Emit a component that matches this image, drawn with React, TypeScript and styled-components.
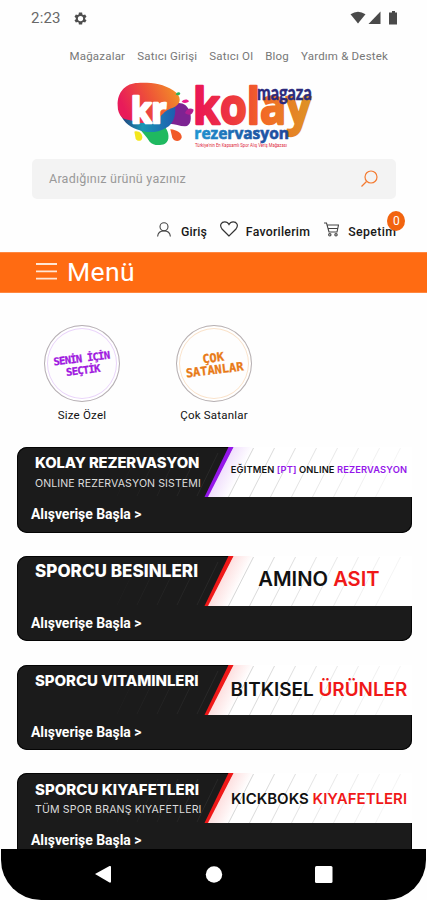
import React from 'react';
import styled, { createGlobalStyle } from 'styled-components';

const GlobalStyle = createGlobalStyle`
  * { box-sizing: border-box; }
  html, body { margin: 0; padding: 0; background: #fff; }
  body { font-family: Roboto, "Liberation Sans", sans-serif; overflow: hidden; }
`;

const Screen = styled.div`
  width: 427px;
  height: 900px;
  display: flex;
  flex-direction: column;
  overflow: hidden;
  background: #fefefe;
`;

const StatusBar = styled.div`
  height: 36px;
  flex: none;
  display: flex;
  align-items: center;
  padding: 0 29px 0 31px;
  color: #686868;
`;

const Clock = styled.span`
  font-size: 15px;
  letter-spacing: 0.2px;
  width: 42px;
`;

const StatusIcons = styled.div`
  margin-left: auto;
  display: flex;
  align-items: center;
`;

const TopLinks = styled.nav`
  height: 40px;
  flex: none;
  display: flex;
  align-items: center;
  gap: 12px;
  padding-left: 69.5px;
`;

const TopLink = styled.a`
  font-size: 11.5px;
  color: #777;
  white-space: nowrap;
  letter-spacing: 0.2px;
`;

const LogoRow = styled.div`
  height: 83px;
  flex: none;
  padding-left: 105px;
  svg { display: block; overflow: visible; }
`;

const SearchBox = styled.div`
  height: 40px;
  flex: none;
  margin: 0 31px 0 32px;
  padding: 0 18px 0 17px;
  border-radius: 5px;
  background: #f3f3f3;
  display: flex;
  align-items: center;
  justify-content: space-between;
`;

const Placeholder = styled.span`
  font-size: 12.5px;
  color: #999;
  letter-spacing: 0.23px;
  padding-bottom: 2px;
`;

const AccountRow = styled.div`
  height: 53px;
  flex: none;
  display: flex;
  align-items: center;
  padding: 12px 0 0 157px;
`;

const AccountItem = styled.div<{ $gap: number; $after: number; $spacing: number }>`
  position: relative;
  display: flex;
  align-items: center;
  gap: ${(p) => p.$gap}px;
  margin-right: ${(p) => p.$after}px;
  font-size: 12.3px;
  font-weight: 500;
  letter-spacing: ${(p) => p.$spacing}px;
  color: #181818;
  svg { margin-top: -5px; }
`;

const CartBadge = styled.span`
  position: absolute;
  right: -9px;
  top: -14px;
  width: 18px;
  height: 20px;
  border-radius: 50%;
  background: #f2640f;
  color: #fff;
  font-size: 12px;
  font-weight: 400;
  letter-spacing: 0;
  display: flex;
  align-items: center;
  justify-content: center;
`;

const MenuBar = styled.div`
  height: 41px;
  flex: none;
  background: #ff6b12;
  border-top: 1px solid #ff8740;
  border-bottom: 1px solid #ff8740;
  display: flex;
  align-items: center;
  gap: 10px;
  padding: 0 0 2px 36px;
  color: #fff;
  font-size: 26.5px;
  letter-spacing: 0.4px;
`;

const Stories = styled.div`
  height: 154px;
  flex: none;
  display: flex;
  gap: 54px;
  padding: 32px 0 0 43px;
`;

const Story = styled.div`
  width: 78px;
  display: flex;
  flex-direction: column;
  align-items: center;
`;

const StoryRing = styled.div<{ $tint: string; $ink: string }>`
  width: 76px;
  height: 77px;
  border-radius: 50%;
  border: 1.5px solid #b5afb2;
  box-shadow: inset 0 0 0 2px #fff, inset 0 0 0 3px ${(p) => p.$tint};
  color: ${(p) => p.$ink};
  display: flex;
  align-items: center;
  justify-content: center;
`;

const StoryArt = styled.div<{ $size: number; $spacing: number }>`
  font-family: "DejaVu Sans Mono", monospace;
  font-size: ${(p) => p.$size}px;
  font-weight: 700;
  line-height: 12px;
  letter-spacing: ${(p) => p.$spacing}px;
  -webkit-text-stroke: 0.3px currentColor;
  text-align: center;
  white-space: nowrap;
  transform: rotate(-7deg);
`;

const StoryLabel = styled.span`
  font-size: 11.5px;
  color: #111;
  margin-top: 6px;
  line-height: 14px;
  white-space: nowrap;
  letter-spacing: 0.2px;
`;

const Banners = styled.div`
  flex: 1;
  min-height: 0;
  overflow: hidden;
  display: flex;
  flex-direction: column;
  gap: 23.3px;
  padding: 0 15px 0 17px;
`;

const BannerCard = styled.div`
  height: 85.5px;
  flex: none;
  border-radius: 10px 0 10px 10px;
  overflow: hidden;
  background: #1b1b1b;
  box-shadow: inset 0 0 0 1px #050505;
`;

const BannerArt = styled.div`
  height: 51px;
  display: grid;
  grid-template-columns: 209px 186px;
  svg { grid-area: 1 / 1 / 2 / 3; display: block; }
`;

const BannerLeft = styled.div`
  grid-area: 1 / 1;
  z-index: 1;
  padding: 6.5px 0 0 18px;
  color: #fff;
  font-family: Inter, sans-serif;
  white-space: nowrap;
`;

const BannerTitle = styled.div<{ $size: number; $spacing: number }>`
  font-size: ${(p) => p.$size}px;
  letter-spacing: ${(p) => p.$spacing}px;
  font-weight: 800;
  line-height: 19px;
`;

const BannerSub = styled.div<{ $spacing: number }>`
  font-size: 10.6px;
  line-height: 21px;
  color: #ddd;
  letter-spacing: ${(p) => p.$spacing}px;
`;

const BannerRight = styled.div<{ $size: number; $spacing: number; $bottom: number }>`
  grid-area: 1 / 2;
  z-index: 1;
  display: flex;
  align-items: center;
  justify-content: center;
  font-family: Inter, sans-serif;
  font-weight: 600;
  font-size: ${(p) => p.$size}px;
  letter-spacing: ${(p) => p.$spacing}px;
  padding-bottom: ${(p) => p.$bottom}px;
  color: #111;
  white-space: pre;
`;

const Accent = styled.span<{ $color: string }>`
  color: ${(p) => p.$color};
`;

const BannerAction = styled.div`
  padding: 6px 0 0 14px;
  font-size: 14px;
  font-weight: 700;
  line-height: 20px;
  color: #fff;
  letter-spacing: -0.05px;
`;

const NavBar = styled.div`
  height: 51px;
  flex: none;
  background: #000;
  border-radius: 0 0 40px 40px;
  margin: 0 1px;
  svg { display: block; }
`;

const Logo = () => (
  <svg width="220" height="80" viewBox="0 3 660 240">
    <defs>
      <linearGradient id="blob" x1="0" y1="0.3" x2="1" y2="0">
        <stop offset="0" stopColor="#e81b5a" />
        <stop offset="0.45" stopColor="#ee5238" />
        <stop offset="1" stopColor="#f39a25" />
      </linearGradient>
      <linearGradient id="word" gradientUnits="userSpaceOnUse" x1="270" y1="0" x2="618" y2="0">
        <stop offset="0" stopColor="#ea1556" />
        <stop offset="0.35" stopColor="#ee3b3c" />
        <stop offset="0.6" stopColor="#f26a25" />
        <stop offset="1" stopColor="#dd9426" />
      </linearGradient>
      <linearGradient id="sea" x1="0" y1="0" x2="1" y2="0">
        <stop offset="0" stopColor="#233b78" />
        <stop offset="0.4" stopColor="#1997b5" />
        <stop offset="1" stopColor="#1e5cb0" />
      </linearGradient>
      <linearGradient id="sub" x1="0" y1="0" x2="1" y2="0">
        <stop offset="0" stopColor="#1f95d2" />
        <stop offset="0.5" stopColor="#1c62ad" />
        <stop offset="1" stopColor="#1f479c" />
      </linearGradient>
    </defs>
    <path d="M196 92C222 76 244 84 254 108C261 128 258 154 240 154C220 154 204 142 180 148Z" fill="#7d2392" />
    <path d="M100 160C122 150 160 146 180 156C192 170 196 198 180 206C164 213 144 212 134 200C124 186 114 172 100 160Z" fill="#1fb960" />
    <path d="M46 118L120 90L208 80C216 112 208 146 184 158C158 174 124 174 104 166C78 158 58 146 46 118Z" fill="url(#sea)" />
    <path d="M38 92C36 50 64 24 98 24C134 22 174 26 204 46C232 64 230 88 204 98C184 104 178 112 168 122C146 144 116 148 92 140C74 134 60 134 52 128C42 118 38 106 38 92Z" fill="url(#blob)" />
    <path d="M88 170C102 166 112 176 112 188C110 200 98 200 92 192Z" fill="#f3e61d" />
    <path d="M196 163C216 164 232 176 230 188C224 202 208 200 202 188Z" fill="#f15a29" />
    <path d="M230 80C236 72 248 72 252 79C246 84 238 86 230 80Z" fill="#ec1b8c" />
    <path d="M212 58C216 50 224 50 226 56C222 62 216 62 212 58Z" fill="#27b45c" />
    <path d="M240 114C246 98 258 98 266 104C264 118 252 124 240 114Z" fill="#b01f90" />
    <text x="78" y="144" textLength="106" lengthAdjust="spacingAndGlyphs" fontFamily="Open Sans, sans-serif" fontWeight="700" fontSize="106" fill="#fff" stroke="#fff" strokeWidth="8" strokeLinejoin="round">kr</text>
    <text x="264" y="148" textLength="354" lengthAdjust="spacingAndGlyphs" fontFamily="Open Sans, sans-serif" fontWeight="700" fontSize="148" fill="url(#word)" stroke="url(#word)" strokeWidth="7" strokeLinejoin="round">kolay</text>
    <text x="456" y="75" textLength="164" lengthAdjust="spacingAndGlyphs" fontFamily="Lato, sans-serif" fontWeight="700" fontSize="60" fill="#2b2a7c" stroke="#2b2a7c" strokeWidth="1.5">magaza</text>
    <text x="268" y="193" textLength="284" lengthAdjust="spacingAndGlyphs" fontFamily="Open Sans, sans-serif" fontWeight="700" fontSize="50" fill="url(#sub)" stroke="url(#sub)" strokeWidth="2">rezervasyon</text>
    <text x="270" y="215" textLength="276" lengthAdjust="spacingAndGlyphs" fontFamily="Roboto, sans-serif" fontSize="18" fill="#e0283c">Türkiye'nin En Kapsamlı Spor Alış Veriş Mağazası</text>
  </svg>
);

type Banner = {
  title: string; size: number; spacing: number;
  sub?: string; subSpacing?: number;
  dark: string; accent: string; tail?: string; accent2?: string;
  rSize: number; rSpacing: number; rBottom: number; color: string;
};

const banners: Banner[] = [
  { title: 'KOLAY REZERVASYON', size: 14.8, spacing: -0.12, sub: 'ONLINE REZERVASYON SISTEMI', subSpacing: 0.08, dark: 'EĞITMEN ', accent: '[PT]', tail: ' ONLINE ', accent2: 'REZERVASYON', rSize: 9.3, rSpacing: 0.14, rBottom: 6, color: '#9416ea' },
  { title: 'SPORCU BESINLERI', size: 17, spacing: 0.05, dark: 'AMINO ', accent: 'ASIT', rSize: 20.2, rSpacing: 0, rBottom: 6, color: '#f01818' },
  { title: 'SPORCU VITAMINLERI', size: 15, spacing: -0.05, dark: 'BITKISEL ', accent: 'ÜRÜNLER', rSize: 18.9, rSpacing: 0, rBottom: 1, color: '#f01818' },
  { title: 'SPORCU KIYAFETLERI', size: 15, spacing: 0.03, sub: 'TÜM SPOR BRANŞ KIYAFETLERI', subSpacing: 0.15, dark: 'KICKBOKS ', accent: 'KIYAFETLERI', rSize: 15, rSpacing: 0, rBottom: 0, color: '#f01818' },
];

const ArtBackdrop = ({ color, id }: { color: string; id: string }) => (
  <svg width="395" height="51" viewBox="0 0 395 51">
    <defs>
      <linearGradient id={id} gradientUnits="userSpaceOnUse" x1="203" x2="220" y1="25" y2="33.5">
        <stop offset="0" stopColor={color} stopOpacity="0.14" />
        <stop offset="1" stopColor={color} stopOpacity="0" />
      </linearGradient>
    </defs>
    <path d="M216 0H395V50H190Z" fill="#fff" />
    <path d="M216 0H242L216 50H190Z" fill={`url(#${id})`} />
    {[0, 1, 2, 3, 4, 5, 6, 7].map((i) => (
      <path key={i} d={`M${236.5 + i * 21} 1L${211.5 + i * 21} 50`} stroke="#555" strokeWidth="0.9" strokeOpacity={0.27 - i * 0.028} />
    ))}
    {[0, 1, 2, 3, 4].map((i) => (
      <path key={i} d={`M${121 + i * 20} 6L${100 + i * 20} 49`} stroke="#fff" strokeOpacity={0.02 + i * 0.01} />
    ))}
    <path d="M211.500 0H216.500L191 50H187.500Z" fill={color} />
  </svg>
);

export default function App() {
  return (
    <>
      <GlobalStyle />
      <Screen>
        <StatusBar>
          <Clock>2:23</Clock>
          <svg width="15" height="15" viewBox="0 0 24 24" fill="#4e4e4e" fillRule="evenodd">
            <path d="M19.4 13a7.500 7.500 0 0 0 0-2l2.200-1.700-2.200-3.800-2.600 1a7.500 7.500 0 0 0-1.800-1L14.600 2.500H9.400L9 5.500a7.500 7.500 0 0 0-1.800 1l-2.600-1-2.200 3.800L4.600 11a7.500 7.500 0 0 0 0 2l-2.200 1.700 2.200 3.800 2.600-1a7.500 7.500 0 0 0 1.800 1l.4 3h5.200l.4-3a7.500 7.500 0 0 0 1.800-1l2.600 1 2.200-3.800ZM12 7.800a4.200 4.200 0 1 1 0 8.400 4.200 4.200 0 0 1 0-8.400Z" />
          </svg>
          <StatusIcons>
            <svg width="48" height="14" viewBox="0 0 48 14" fill="#4a4a4a">
              <path d="M0.500 3.200Q8 -1.800 15.500 3.200L8 12.500Z" />
              <path d="M30.500 0.500V13H18.500Z" />
              <path d="M41 1.500H42V0H45V1.500H47V13.500H39V1.500Z" />
            </svg>
          </StatusIcons>
        </StatusBar>
        <TopLinks>
          <TopLink>Mağazalar</TopLink>
          <TopLink>Satıcı Girişi</TopLink>
          <TopLink>Satıcı Ol</TopLink>
          <TopLink>Blog</TopLink>
          <TopLink>Yardım &amp; Destek</TopLink>
        </TopLinks>
        <LogoRow><Logo /></LogoRow>
        <SearchBox>
          <Placeholder>Aradığınız ürünü yazınız</Placeholder>
          <svg width="17" height="18" viewBox="0 0 17 18" fill="none" stroke="#f47a30" strokeWidth="1.200">
            <circle cx="10" cy="7" r="6" />
            <path d="M5.500 11.500L0.500 16.500" />
          </svg>
        </SearchBox>
        <AccountRow>
          <AccountItem $gap={10} $after={13} $spacing={0.1}>
            <svg width="14" height="15" viewBox="0 0 14 15" fill="none" stroke="#444" strokeWidth="1.100">
              <circle cx="7" cy="4.800" r="4" />
              <path d="M0.600 14.500C1 10.500 3.500 8.900 7 8.900S13 10.500 13.400 14.500" />
            </svg>
            Giriş
          </AccountItem>
          <AccountItem $gap={8} $after={14} $spacing={0.26}>
            <svg width="18" height="16" viewBox="0 0 18 16" fill="none" stroke="#333" strokeWidth="1.200">
              <path d="M9 15L2 8C-1 4 1.500 0.800 4.800 0.800C7 0.800 8.400 2.200 9 3.400C9.600 2.200 11 0.800 13.200 0.800C16.500 0.800 19 4 16 8Z" />
            </svg>
            Favorilerim
          </AccountItem>
          <AccountItem $gap={9} $after={0} $spacing={0.4}>
            <svg width="15" height="15" viewBox="0 0 15 15" fill="none" stroke="#444" strokeWidth="1.100">
              <path d="M0 1H2.500L5 10H13L14.500 3H3.200M4 6.500H13.500" />
              <circle cx="5.800" cy="12.800" r="1.200" />
              <circle cx="12" cy="12.800" r="1.200" />
            </svg>
            Sepetim
            <CartBadge>0</CartBadge>
          </AccountItem>
        </AccountRow>
        <MenuBar>
          <svg width="21" height="17" viewBox="0 0 21 17" stroke="#ffe6d6" strokeWidth="1.800">
            <path d="M0 1H21M0 8.300H21M0 15.600H21" />
          </svg>
          Menü
        </MenuBar>
        <Stories>
          <Story>
            <StoryRing $tint="#ead5fa" $ink="#a018e0"><StoryArt $size={10.5} $spacing={-0.7}>SENİN İÇİN<br />SEÇTİK</StoryArt></StoryRing>
            <StoryLabel>Size Özel</StoryLabel>
          </Story>
          <Story>
            <StoryRing $tint="#fae3cb" $ink="#e87a16"><StoryArt $size={12} $spacing={0}>ÇOK<br />SATANLAR</StoryArt></StoryRing>
            <StoryLabel>Çok Satanlar</StoryLabel>
          </Story>
        </Stories>
        <Banners>
          {banners.map((b, i) => (
            <BannerCard key={b.title}>
              <BannerArt>
                <ArtBackdrop color={b.color} id={`glow${i}`} />
                <BannerLeft>
                  <BannerTitle $size={b.size} $spacing={b.spacing}>{b.title}</BannerTitle>
                  {b.sub && <BannerSub $spacing={b.subSpacing ?? 0}>{b.sub}</BannerSub>}
                </BannerLeft>
                <BannerRight $size={b.rSize} $spacing={b.rSpacing} $bottom={b.rBottom}>
                  {b.dark}<Accent $color={b.color}>{b.accent}</Accent>{b.tail}
                  {b.accent2 && <Accent $color={b.color}>{b.accent2}</Accent>}
                </BannerRight>
              </BannerArt>
              <BannerAction>Alışverişe Başla &gt;</BannerAction>
            </BannerCard>
          ))}
        </Banners>
        <NavBar>
          <svg width="425" height="51" viewBox="1 0 425 51" fill="#fff">
            <path d="M95 25L109.500 17Q111 16.500 111 18V32.500Q111 34 109.500 33.500Z" />
            <circle cx="214" cy="25.500" r="8.200" />
            <rect x="315" y="17" width="17.500" height="17" rx="1.500" />
          </svg>
        </NavBar>
      </Screen>
    </>
  );
}
